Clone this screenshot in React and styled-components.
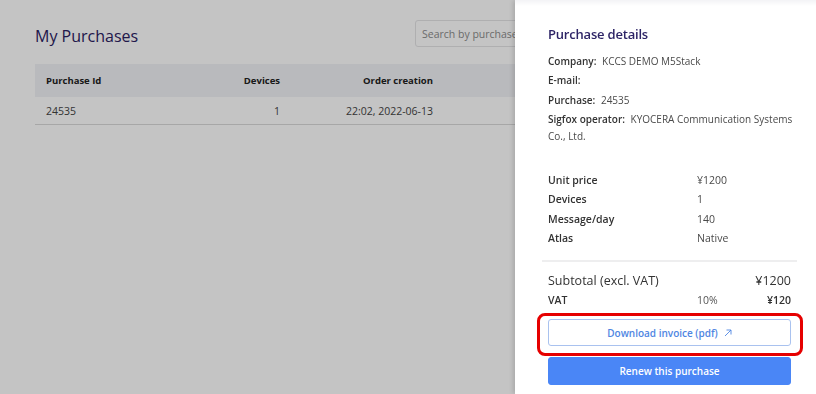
import React from 'react';
import styled, { createGlobalStyle } from 'styled-components';

const GlobalStyle = createGlobalStyle`
    html, body {
        margin: 0;
        padding: 0;
        height: 100%;
        overflow: hidden;
        font-family: "Open Sans", "Noto Sans", sans-serif;
    }
    * { box-sizing: border-box; }
`

const Page = styled.main`
    height: 394px;
    padding: 20px 35px 0;
    background: #ffffff;
`

const TopBar = styled.div`
    display: flex;
    align-items: flex-start;
    justify-content: space-between;
    height: 44px;
`

const Title = styled.h1`
    margin: 5px 0 0;
    font-size: 16px;
    font-weight: 400;
    line-height: 22px;
    color: #2b2162;
`

const SearchInput = styled.input`
    width: 366px;
    height: 27px;
    padding: 0 6px;
    border: 1px solid #e4e4e6;
    border-radius: 3px;
    font-family: inherit;
    font-size: 10.5px;
    color: #333;
    &::placeholder { color: #8c8c8c; }
`

const Table = styled.div`
    width: 100%;
`

const Row = styled.div`
    display: grid;
    grid-template-columns: 154px 80px 153px 1fr;
    align-items: center;
    height: ${p => (p.$head ? '33px' : '28px')};
    padding-left: 11px;
    background: ${p => (p.$head ? '#f1f2f6' : 'transparent')};
    border-bottom: ${p => (p.$head ? 'none' : '1px solid #dadada')};
    font-size: ${p => (p.$head ? '9.5px' : '10.5px')};
    font-weight: ${p => (p.$head ? 700 : 400)};
    color: ${p => (p.$head ? '#222' : '#444')};
`

const Cell = styled.div`
    text-align: ${p => (p.$right ? 'right' : 'left')};
`

const Backdrop = styled.div`
    position: fixed;
    inset: 0;
    background: rgba(0, 0, 0, 0.231);
`

const Drawer = styled.aside`
    position: fixed;
    top: 0;
    right: 0;
    width: 301px;
    height: 394px;
    display: flex;
    flex-direction: column;
    background: linear-gradient(#f3f3f6, #ffffff 6px);
    box-shadow: -2px 0 5px rgba(0, 0, 0, 0.15);
`

const DrawerBody = styled.div`
    flex: 1;
    overflow: hidden;
    padding: 24px 25px 0 33px;
`

const DrawerTitle = styled.h2`
    margin: 0 0 8.5px;
    font-size: 13px;
    font-weight: 600;
    letter-spacing: -0.2px;
    line-height: 20px;
    color: #2d2466;
`

const InfoList = styled.div`
    display: flex;
    flex-direction: column;
    gap: 2.5px;
    margin-right: -6px;
    font-size: 10px;
    line-height: 17px;
    color: #4a4a4a;
`

const InfoItem = styled.div`
    b {
        font-weight: 600;
        color: #333;
        margin-right: 3px;
    }
`

const Specs = styled.div`
    display: grid;
    grid-template-columns: 149px 1fr;
    row-gap: 2.3px;
    margin-top: 27px;
    font-size: 10.5px;
    line-height: 17px;
    color: #4a4a4a;
`

const SpecLabel = styled.div`
    font-weight: 600;
    color: #333;
`

const Divider = styled.hr`
    margin: 13.5px -6px 9.7px;
    border: none;
    border-top: 2px solid #eeeeef;
`

const SumRow = styled.div`
    display: grid;
    grid-template-columns: 149px 1fr auto;
    font-size: ${p => (p.$big ? '12.5px' : '10.5px')};
    line-height: ${p => (p.$big ? '18px' : '17px')};
    font-weight: ${p => (p.$big ? 400 : 600)};
    color: #333;
    margin-bottom: 1.5px;
`

const Pct = styled.span`
    font-weight: 400;
    color: #555;
`

const Footer = styled.div`
    display: flex;
    flex-direction: column;
    gap: 11px;
    height: 79px;
    padding: 4px 25px 9px 33px;
    background: #ffffff;
`

const Button = styled.button`
    display: flex;
    align-items: center;
    justify-content: center;
    gap: 6px;
    height: ${p => (p.$primary ? '28px' : '27px')};
    border-radius: 3px;
    border: 1px solid ${p => (p.$primary ? '#4a86f6' : '#a9c2ef')};
    background: ${p => (p.$primary ? '#4a86f6' : '#ffffff')};
    color: ${p => (p.$primary ? '#ffffff' : '#4f86e2')};
    font-family: inherit;
    font-size: 10px;
    font-weight: 600;
    cursor: pointer;
`

const Highlight = styled.div`
    position: fixed;
    left: 537px;
    top: 313px;
    width: 266px;
    height: 43px;
    border: 3.5px solid #e60000;
    border-radius: 8px;
    pointer-events: none;
`

const ExternalIcon = () => (
    <svg width="8" height="8" viewBox="0 0 8 8" fill="none" stroke="currentColor" strokeWidth="0.9">
        <path d="M1 7 L7 1 M2.5 1 H7 V5.5" />
    </svg>
);

export default function App() {
    return (
        <>
            <GlobalStyle />
            <Page>
                <TopBar>
                    <Title>My Purchases</Title>
                    <SearchInput placeholder="Search by purchase id" />
                </TopBar>
                <Table>
                    <Row $head>
                        <Cell>Purchase Id</Cell>
                        <Cell $right>Devices</Cell>
                        <Cell $right>Order creation</Cell>
                        <Cell />
                    </Row>
                    <Row>
                        <Cell>24535</Cell>
                        <Cell $right>1</Cell>
                        <Cell $right>22:02, 2022-06-13</Cell>
                        <Cell />
                    </Row>
                </Table>
            </Page>
            <Backdrop />
            <Drawer>
                <DrawerBody>
                    <DrawerTitle>Purchase details</DrawerTitle>
                    <InfoList>
                        <InfoItem><b>Company:</b> KCCS DEMO M5Stack</InfoItem>
                        <InfoItem><b>E-mail:</b></InfoItem>
                        <InfoItem><b>Purchase:</b> 24535</InfoItem>
                        <InfoItem><b>Sigfox operator:</b> KYOCERA Communication Systems Co., Ltd.</InfoItem>
                    </InfoList>
                    <Specs>
                        <SpecLabel>Unit price</SpecLabel><div>¥1200</div>
                        <SpecLabel>Devices</SpecLabel><div>1</div>
                        <SpecLabel>Message/day</SpecLabel><div>140</div>
                        <SpecLabel>Atlas</SpecLabel><div>Native</div>
                    </Specs>
                    <Divider />
                    <SumRow $big><span>Subtotal (excl. VAT)</span><span /><span>¥1200</span></SumRow>
                    <SumRow><span>VAT</span><Pct>10%</Pct><span>¥120</span></SumRow>
                    <SumRow $big><span>Total (incl. VAT)</span><span /><span>¥1320</span></SumRow>
                </DrawerBody>
                <Footer>
                    <Button>Download invoice (pdf) <ExternalIcon /></Button>
                    <Button $primary>Renew this purchase</Button>
                </Footer>
            </Drawer>
            <Highlight />
        </>
    );
}
